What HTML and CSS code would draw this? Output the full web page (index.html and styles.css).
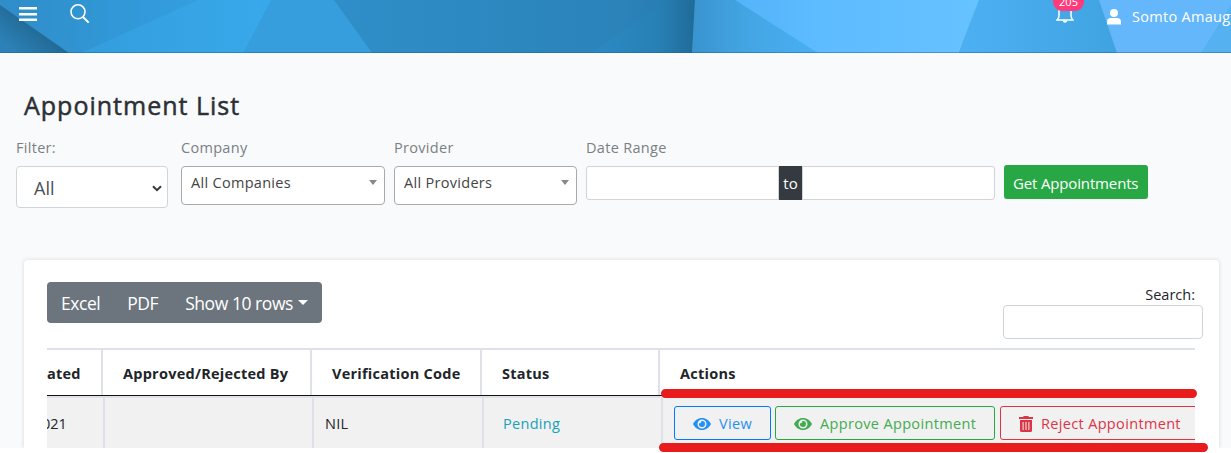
FILE: index.html
```html
<!DOCTYPE html>
<html lang="en">
<head>
<meta charset="utf-8">
<title>Appointment List</title>
<link rel="stylesheet" href="styles.css">
</head>
<body>
<div class="page">
  <header class="topbar">
    <svg class="topbar-art" viewBox="0 0 1231 53" preserveAspectRatio="none" aria-hidden="true">
      <defs>
        <linearGradient id="g1" x1="0" x2="1"><stop offset="0" stop-color="#2f8dc8"/><stop offset=".6" stop-color="#329ada"/><stop offset="1" stop-color="#36a1e3"/></linearGradient>
        <linearGradient id="g2" gradientUnits="userSpaceOnUse" x1="10" y1="50" x2="36" y2="18"><stop offset="0" stop-color="#2c82b8"/><stop offset="1" stop-color="#20658f"/></linearGradient>
        <linearGradient id="g3" x1="0" x2="1"><stop offset="0" stop-color="#339ddd"/><stop offset="1" stop-color="#38a9eb"/></linearGradient>
        <linearGradient id="g4" x1="0" x2="1"><stop offset="0" stop-color="#2f8ec8"/><stop offset=".8" stop-color="#2b83ba"/><stop offset="1" stop-color="#2679ac"/></linearGradient>
        <linearGradient id="g5" x1="0" x2="1"><stop offset="0" stop-color="#2c8ac3"/><stop offset=".65" stop-color="#2780b5"/><stop offset="1" stop-color="#1f6b98"/></linearGradient>
        <linearGradient id="g6" x1="0" x2="1"><stop offset="0" stop-color="#3993cf"/><stop offset=".4" stop-color="#43a4e2"/><stop offset="1" stop-color="#49b0f3"/></linearGradient>
        <linearGradient id="g7" x1="0" x2="1"><stop offset="0" stop-color="#54b4f9"/><stop offset=".35" stop-color="#5dbbff"/><stop offset="1" stop-color="#67c2ff"/></linearGradient>
        <linearGradient id="g8" x1="0" x2="1"><stop offset="0" stop-color="#4cb0f3"/><stop offset="1" stop-color="#40a3e1"/></linearGradient>
      </defs>
      <path fill="url(#g1)" d="M0 0H240V53H0z"/>
      <path fill="url(#g2)" d="M0 5L69 53H0z"/>
      <path fill="url(#g3)" d="M81 53L198 0H272L244 53z"/>
      <path fill="#379ede" d="M271 0H335L373 53H243z"/>
      <path fill="url(#g4)" d="M334 0H695V53H372z"/>
      <path fill="url(#g5)" d="M592 53L666 0H695L692 53z"/>
      <path fill="url(#g6)" d="M695 0H820V53H692z"/>
      <path fill="url(#g7)" d="M735 0H980L958 53H818z"/>
      <path fill="url(#g8)" d="M979 0H1100L1118 53H958z"/>
      <path fill="#63b7fa" d="M1099 0H1231V53H1117z"/>
      <path fill="#56b1f1" d="M1231 5V53H1201z"/>
      <path fill="#18628f" opacity=".45" d="M0 52H1231V53H0z"/>
    </svg>
    <div class="topbar-left">
      <svg class="menu-icon" viewBox="0 0 18 14"><path fill="#fff" d="M0 0h18v2.6H0zM0 6h18v2.6H0zM0 11.4h18V14H0z"/></svg>
      <svg class="search-icon" viewBox="0 0 20 20"><circle cx="8" cy="7.8" r="7" fill="none" stroke="#fff" stroke-width="1.6"/><path d="M13 13L18.7 18.6" stroke="#fff" stroke-width="2"/></svg>
    </div>
    <div class="topbar-right">
      <div class="bell">
        <svg class="bell-icon" viewBox="0 0 18 20"><path fill="none" stroke="#fff" stroke-width="1.5" d="M3 4V13Q3 15 1 17H17Q15 15 15 13V4"/><path fill="#fff" d="M6.5 17.5h5q-.7 2.2-2.500 2.200t-2.500-2.200z"/></svg>
        <span class="bell-count">205</span>
      </div>
      <svg class="user-icon" viewBox="0 0 14 16"><circle cx="7" cy="4" r="4" fill="#fff"/><path fill="#fff" d="M0 15.500V12.500Q0 9 4 9h6q4 0 4 3.500v3z"/></svg>
      <span class="user-name">Somto Amaug</span>
    </div>
  </header>

  <h1 class="title">Appointment List</h1>

  <div class="filters">
    <div class="field field-filter">
      <span class="label">Filter:</span>
      <div class="select-native"><span>All</span><svg class="chevron" viewBox="0 0 10 7"><path d="M1 1.200L5 5.200L9 1.200" fill="none" stroke="#343a40" stroke-width="2"/></svg></div>
    </div>
    <div class="field field-company">
      <span class="label">Company</span>
      <div class="select-box"><span>All Companies</span><i class="caret"></i></div>
    </div>
    <div class="field field-provider">
      <span class="label">Provider</span>
      <div class="select-box"><span>All Providers</span><i class="caret"></i></div>
    </div>
    <div class="field field-range">
      <span class="label">Date Range</span>
      <div class="range"><div class="range-input range-start"></div><span class="range-to">to</span><div class="range-input range-end"></div></div>
    </div>
    <div class="get-btn"><span>Get Appointments</span></div>
  </div>

  <section class="card">
    <div class="tools">
      <div class="btn-group"><span class="t-excel">Excel</span><span class="t-pdf">PDF</span><span class="t-rows">Show 10 rows</span><i class="caret-white"></i></div>
      <div class="search"><span class="search-label">Search:</span><div class="search-input"></div></div>
    </div>
    <div class="table">
      <div class="row head">
        <div class="h1c"><span class="t-ated">ated</span></div>
        <div class="h2c"><span class="t-by">Approved/Rejected By</span></div>
        <div class="h3c"><span class="t-code">Verification Code</span></div>
        <div class="h4c"><span class="t-status">Status</span></div>
        <div class="h5c"><span class="t-actions">Actions</span></div>
      </div>
      <div class="row body">
        <div class="b1c"><span class="t-year">021</span></div>
        <div class="b2c"></div>
        <div class="b3c"><span>NIL</span></div>
        <div class="b4c"><span class="t-pending">Pending</span></div>
        <div class="b5c">
          <div class="btn view"><svg class="eye" viewBox="0 0 18 12"><path fill="currentColor" fill-rule="evenodd" d="M9 0C13 0 16.400 2.600 18 6C16.400 9.400 13 12 9 12S1.600 9.400 0 6C1.600 2.600 5 0 9 0zM9 1.500a4.500 4.500 0 1 0 0 9a4.500 4.500 0 1 0 0-9z"/><path fill="currentColor" d="M9 3a3 3 0 1 1-2.900 2.200A1.600 1.600 0 0 0 8.200 3.100z"/></svg><span class="t-view">View</span></div>
          <div class="btn approve"><svg class="eye" viewBox="0 0 18 12"><path fill="currentColor" fill-rule="evenodd" d="M9 0C13 0 16.400 2.600 18 6C16.400 9.400 13 12 9 12S1.600 9.400 0 6C1.600 2.600 5 0 9 0zM9 1.500a4.500 4.500 0 1 0 0 9a4.500 4.500 0 1 0 0-9z"/><path fill="currentColor" d="M9 3a3 3 0 1 1-2.900 2.200A1.600 1.600 0 0 0 8.200 3.100z"/></svg><span class="t-approve">Approve Appointment</span></div>
          <div class="btn reject"><svg class="trash" viewBox="0 0 14 16"><path fill="currentColor" fill-rule="evenodd" d="M0 1h4l.8-1h4.400L10 1h4v2H0zM1 4h12v10.500q0 1.500-1.500 1.500h-9Q1 16 1 14.500zM3.600 6v8h1V6zM6.500 6v8h1V6zM9.400 6v8h1V6z"/></svg><span class="t-reject">Reject Appointment</span></div>
        </div>
      </div>
    </div>
  </section>
  <svg class="marks" viewBox="0 0 1231 453"><path d="M665.500 393.500H1192.500M663.500 447.500H1203.500" stroke="#e81c1c" stroke-width="9" stroke-linecap="round"/></svg>
</div>
</body>
</html>
```
FILE: styles.css
```css
* { box-sizing: border-box; }
body { margin: 0; height: 453px; background: #fff; font: 15px/20px "Open Sans", "Noto Sans", sans-serif; color: #212529; }
span { white-space: nowrap; }
svg { display: block; flex: none; }
.page { position: relative; width: 1231px; height: 453px; background: linear-gradient(#f9fafc 448px, #fff 448px); overflow: hidden; }
.topbar { position: relative; height: 53px; display: flex; justify-content: space-between; overflow: hidden; }
.topbar-art { position: absolute; inset: 0; width: 1231px; height: 53px; }
.topbar-left, .topbar-right { position: relative; display: flex; align-items: flex-start; color: #fff; }
.menu-icon { width: 18px; height: 14px; margin: 7px 0 0 19px; }
.search-icon { width: 20px; height: 20px; margin: 4px 0 0 33px; }
.topbar-right { width: 175px; }
.bell { position: relative; width: 18px; margin-top: 3px; }
.bell-icon { width: 18px; height: 20px; }
.bell-count { position: absolute; left: -3px; top: -11px; width: 31px; height: 19px; border-radius: 9px; background: #ff3b7c; text-align: center; font-size: 11px; line-height: 20px; }
.user-icon { width: 14px; height: 16px; margin: 9px 0 0 33px; }
.user-name { margin: 7px 0 0 11px; font-size: 14.500px; letter-spacing: .3px; }
.title { margin: 36px 0 0 24px; height: 33px; font-size: 25px; line-height: 32px; font-weight: 500; letter-spacing: 1px; color: #2c3034; width: max-content; -webkit-text-stroke: .5px #2c3034; }
.filters { display: flex; align-items: flex-start; margin-top: 16px; padding-left: 16px; height: 122px; }
.label { display: block; height: 28px; line-height: 20px; color: #7b7f83; font-size: 14.500px; letter-spacing: .3px; width: max-content; }
.field-filter { width: 152px; margin-right: 13px; }
.field-company { width: 204px; margin-right: 9px; }
.field-provider { width: 183px; margin-right: 9px; }
.field-range { width: 409px; margin-right: 9px; }
.select-native { height: 42px; border: 1px solid #ced4da; border-radius: 4px; background: #fff; display: flex; justify-content: space-between; align-items: center; padding: 2px 5px 0 17px; font-size: 18px; color: #495057; }
.chevron { width: 10px; height: 7px; }
.select-box { height: 39px; border: 1px solid #aaa; border-radius: 4px; background: #fff; display: flex; justify-content: space-between; padding: 6px 7px 0 9px; font-size: 14.500px; letter-spacing: .3px; color: #444; }
.caret { width: 0; height: 0; border: 4.500px solid transparent; border-top: 5px solid #888; border-bottom: 0; margin-top: 7px; }
.range { display: flex; height: 34px; }
.range-input { width: 193px; border: 1px solid #ced4da; background: #fff; }
.range-start { border-radius: 3px 0 0 3px; }
.range-end { border-radius: 0 3px 3px 0; }
.range-to { width: 23px; background: #343a40; color: #fff; text-align: center; line-height: 35px; }
.get-btn { width: 144px; height: 34px; margin-top: 27px; border-radius: 3px; background: #28a745; color: #fff; line-height: 37px; padding-left: 9px; letter-spacing: -.15px; }
.card { margin-left: 24px; width: 1195px; height: 188px; background: #fff; border-radius: 4px 4px 0 0; box-shadow: 0 0 4px rgba(0,0,0,.14); padding: 22px 23px 0; clip-path: inset(-5px -5px 0 -5px); }
.tools { display: flex; justify-content: space-between; height: 66px; }
.btn-group { width: 275px; height: 41px; display: flex; align-items: center; background: #6c757d; color: #fff; border-radius: 4px; padding: 0 0 0 14px; font-size: 17.500px; letter-spacing: -.45px; }
.t-pdf, .t-rows { margin-left: 27px; }
.caret-white { width: 0; height: 0; border: 5px solid transparent; border-top: 5px solid #fff; border-bottom: 0; margin-left: 5px; }
.search { width: 200px; margin-right: -7px; padding-top: 3px; }
.search-label { display: block; width: max-content; margin: 0 8px 0 auto; font-size: 14.500px; }
.search-input { height: 34px; border: 1px solid #ced4da; border-radius: 4px; }
.table { width: 1148px; overflow: hidden; border-top: 2px solid #dee2e6; }
.row { display: flex; width: 1148px; }
.row > div { flex: none; }
.head { height: 46px; border-bottom: 1px solid #111; font-weight: 700; font-size: 14.500px; line-height: 48px; letter-spacing: .25px; }
.head div { border-right: 2px solid #dee2e6; padding-left: 20px; }
.head .h1c { width: 56px; padding-left: 0; }
.h2c { width: 209px; }
.h3c { width: 170px; }
.h4c { width: 178px; }
.head .h5c { width: 535px; border-right: 0; }
.body { height: 54px; background: #f1f1f1; border-top: 2px solid #dee2e6; line-height: 52px; font-size: 14.500px; letter-spacing: .3px; }
.body > div { border-right: 2px solid #dee2e6; }
.b1c { width: 58px; display: flex; }
.t-year { margin-left: -5px; letter-spacing: 0; }
.b2c { width: 209px; }
.b3c { width: 170px; padding-left: 11px; }
.b4c { width: 179px; padding-left: 19px; color: #17a2b8; }
.body > .b5c { width: 532px; border: 0; display: flex; padding: 8px 0 0 11px; line-height: 20px; }
.btn { height: 34px; flex: none; display: flex; align-items: center; border: 1px solid; border-radius: 3px; padding-left: 18px; padding-top: 1px; letter-spacing: .34px; }
.btn span { margin-left: 8px; }
.eye { width: 18px; height: 12px; }
.trash { width: 14px; height: 16px; }
.view { width: 97px; color: #2490f5; border-color: #007bff; margin-right: 4px; }
.approve { width: 220px; color: #43ac50; border-color: #28a745; margin-right: 5px; }
.reject { width: 220px; color: #dc3545; }
.marks { position: absolute; left: 0; top: 0; width: 1231px; height: 453px; }
```
